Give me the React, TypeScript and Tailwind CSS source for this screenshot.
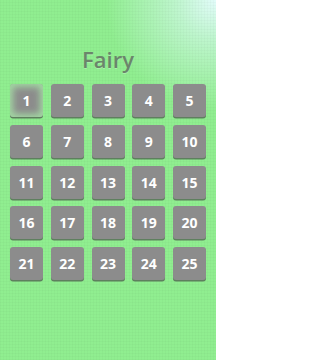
import React from "react"

const levels = Array.from({ length: 25 }, (_, i) => i + 1)

const LevelTile = ({ n, selected }: { n: number; selected: boolean }) => (
  <div
    className={
      "flex h-[33px] w-[33px] items-center justify-center rounded-[3px] bg-[#8c8c8c] text-[14px] font-bold text-white " +
      (selected
        ? "shadow-[inset_0_0_7px_3px_rgba(165,225,165,0.9),0_1.5px_0_#5e7f5e]"
        : "shadow-[0_1.5px_0_#5e7f5e]")
    }
    style={{ fontFamily: '"Open Sans", "DejaVu Sans", sans-serif' }}
  >
    {n}
  </div>
)

export default function App() {
  return (
    <div className="relative h-[360px] w-[216px] overflow-hidden bg-[#90ee90]">
      <div className="absolute inset-0 bg-[radial-gradient(circle_at_100%_0%,rgba(226,252,250,1)_0px,rgba(205,248,225,0.75)_40px,rgba(144,238,144,0)_110px)]" />
      <div className="absolute inset-0 bg-[repeating-linear-gradient(0deg,rgba(0,0,0,0.02)_0px,rgba(0,0,0,0.02)_1px,transparent_1px,transparent_3px),repeating-linear-gradient(90deg,rgba(0,0,0,0.02)_0px,rgba(0,0,0,0.02)_1px,transparent_1px,transparent_3px)]" />
      <div className="relative flex flex-col items-center pt-[44px]">
        <h1
          className="text-[22px] font-semibold leading-[30px] text-[#6b856b] [text-shadow:0_1px_0_rgba(255,255,255,0.25)]"
          style={{ fontFamily: '"Open Sans", "DejaVu Sans", sans-serif' }}
        >
          Fairy
        </h1>
        <div className="mt-[10px] grid grid-cols-[repeat(5,33px)] gap-x-[7.75px] gap-y-[7.75px]">
          {levels.map((n) => (
            <LevelTile key={n} n={n} selected={n === 1} />
          ))}
        </div>
      </div>
    </div>
  )
}
